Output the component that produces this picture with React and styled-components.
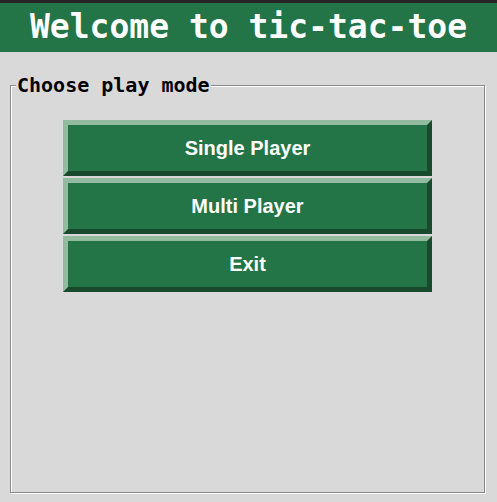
import React from "react";
import styled, { createGlobalStyle } from "styled-components";

const GlobalStyle = createGlobalStyle`
  html, body {
    margin: 0;
    padding: 0;
    background: #d9d9d9;
  }
`;

const Window = styled.div`
  width: 497px;
  height: 502px;
  display: flex;
  flex-direction: column;
  background: #d9d9d9;
  border-top: 3px solid #262626;
  box-sizing: border-box;
`;

const Header = styled.h1`
  margin: 0;
  height: 49px;
  display: flex;
  align-items: center;
  justify-content: center;
  padding-bottom: 2px;
  box-sizing: border-box;
  background: #237446;
  color: #ffffff;
  font-family: "DejaVu Sans Mono", monospace;
  font-weight: bold;
  font-size: 33px;
`;

const Body = styled.div`
  flex: 1;
  display: flex;
  padding: 21px 12px 9px 10px;
  box-sizing: border-box;
`;

const Frame = styled.fieldset`
  flex: 1;
  margin: 0;
  padding: 23px 0 0 0;
  border: 1px solid #8a8a8a;
  box-shadow: 1px 1px 0 #ffffff, inset 1px 1px 0 #ffffff;
  display: flex;
  flex-direction: column;
  align-items: center;
  gap: 2px;
  min-width: 0;
`;

const Legend = styled.legend`
  margin-left: 5px;
  padding: 0 1px;
  background: #d9d9d9;
  color: #000000;
  font-family: "DejaVu Sans Mono", monospace;
  font-weight: bold;
  font-size: 20px;
  line-height: 24px;
`;

const ModeButton = styled.button`
  width: 369px;
  height: 56px;
  box-sizing: border-box;
  border-style: solid;
  border-width: 5px;
  border-color: #92bba0 #1a4a2d #1a4a2d #92bba0;
  background: #237446;
  color: #ffffff;
  font-family: "Liberation Sans", Arial, sans-serif;
  font-weight: bold;
  font-size: 20px;
  padding: 0;
  cursor: pointer;
`;

const modes = ["Single Player", "Multi Player", "Exit"];

function App() {
  return (
    <>
      <GlobalStyle />
      <Window>
        <Header>Welcome to tic-tac-toe</Header>
        <Body>
          <Frame>
            <Legend>Choose play mode</Legend>
            {modes.map((m) => (
              <ModeButton key={m}>{m}</ModeButton>
            ))}
          </Frame>
        </Body>
      </Window>
    </>
  );
}

export default App;
